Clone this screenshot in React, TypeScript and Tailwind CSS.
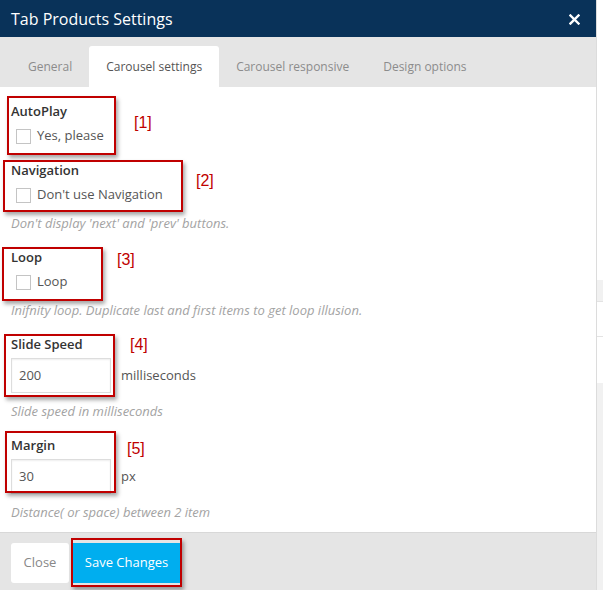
import React from 'react';

const font = { fontFamily: '"Open Sans", "Liberation Sans", sans-serif' };

function RedBox({ className, tag, tagClass }: { className: string; tag: string; tagClass: string }) {
  return (
    <>
      <div className={`absolute border-2 border-[#c00000] shadow-[2px_3px_4px_rgba(0,0,0,0.35)] pointer-events-none ${className}`} />
      <span className={`absolute text-[16px] leading-none text-[#c00000] font-['Liberation_Sans',sans-serif] ${tagClass}`}>{tag}</span>
    </>
  );
}

function Check({ label }: { label: string }) {
  return (
    <div className="flex items-center h-[18px] mt-[7px] pl-[5px]">
      <span className="w-[15px] h-[15px] border border-[#c4c4c4] bg-white shrink-0" />
      <span className="ml-[6px] text-[13px] text-[#555]">{label}</span>
    </div>
  );
}

function Label({ children }: { children: React.ReactNode }) {
  return <div className="h-[18px] leading-[18px] text-[13px] font-semibold text-[#333]">{children}</div>;
}

function Desc({ children, mt }: { children: React.ReactNode; mt: string }) {
  return <div className={`h-[18px] leading-[18px] text-[13px] italic text-[#a3a3a3] ${mt}`}>{children}</div>;
}

function NumberField({ value, unit }: { value: string; unit: string }) {
  return (
    <div className="flex items-center mt-[5px]">
      <div className="w-[100px] h-[35px] border border-[#ddd] shadow-[inset_0_1px_2px_rgba(0,0,0,0.07)] flex items-center pl-[7px] text-[13px] text-[#555]">
        {value}
      </div>
      <span className="ml-[10px] text-[13px] text-[#555]">{unit}</span>
    </div>
  );
}

export default function App() {
  const tabs = ['General', 'Carousel settings', 'Carousel responsive', 'Design options'];
  return (
    <div className="flex w-[603px] h-[590px] overflow-hidden bg-white" style={font}>
      <div className="w-[597px] shrink-0 flex flex-col border-r border-[#dcdcdc]">
        <div className="h-[37px] bg-[#093259] flex items-center justify-between pl-[11px] pr-[16px]">
          <span className="text-[16px] text-white leading-none">Tab Products Settings</span>
          <svg width="11" height="11" viewBox="0 0 11 11" className="mt-[2px]">
            <path d="M1.5 1.5L9.5 9.5M9.5 1.5L1.5 9.5" stroke="white" strokeWidth="2.4" strokeLinecap="square" />
          </svg>
        </div>

        <div className="h-[50px] bg-[#e5e5e5] flex items-end pl-[11px]">
          {tabs.map((t, i) => (
            <div
              key={t}
              className={`h-[41px] flex items-center pt-[1px] px-[17px] text-[12px] rounded-t-[3px] ${
                i === 1 ? 'bg-white text-[#555]' : 'text-[#8c8c8c]'
              }`}
            >
              {t}
            </div>
          ))}
        </div>

        <div className="relative flex-1 pt-[15px] pl-[11px]">
          <Label>AutoPlay</Label>
          <Check label="Yes, please" />
          <div className="mt-[16px]">
            <Label>Navigation</Label>
            <Check label="Don't use Navigation" />
            <Desc mt="mt-[10px]">Don't display 'next' and 'prev' buttons.</Desc>
          </div>
          <div className="mt-[16px]">
            <Label>Loop</Label>
            <Check label="Loop" />
            <Desc mt="mt-[10px]">Inifnity loop. Duplicate last and first items to get loop illusion.</Desc>
          </div>
          <div className="mt-[16px]">
            <Label>Slide Speed</Label>
            <NumberField value="200" unit="milliseconds" />
            <Desc mt="mt-[9px]">Slide speed in milliseconds</Desc>
          </div>
          <div className="mt-[16px]">
            <Label>Margin</Label>
            <NumberField value="30" unit="px" />
            <Desc mt="mt-[9px]">Distance( or space) between 2 item</Desc>
          </div>

          <RedBox className="left-[7px] top-[9px] w-[109px] h-[59px]" tag="[1]" tagClass="left-[134px] top-[28px]" />
          <RedBox className="left-[3px] top-[73px] w-[180px] h-[52px]" tag="[2]" tagClass="left-[196px] top-[86px]" />
          <RedBox className="left-[2px] top-[160px] w-[101px] h-[54px]" tag="[3]" tagClass="left-[117px] top-[165px]" />
          <RedBox className="left-[4px] top-[247px] w-[111px] h-[63px]" tag="[4]" tagClass="left-[130px] top-[250px]" />
          <RedBox className="left-[5px] top-[344px] w-[111px] h-[62px]" tag="[5]" tagClass="left-[127px] top-[354px]" />
        </div>

        <div className="relative h-[58px] bg-[#e5e5e5] border-t border-[#d8d8d8] flex items-start pt-[10px] pl-[11px] gap-[4px]">
          <button className="h-[40px] w-[58px] bg-white rounded-[3px] text-[13px] text-[#888]">Close</button>
          <button className="h-[40px] w-[107px] bg-[#00aeef] text-[13px] text-white">Save Changes</button>
          <div className="absolute left-[71px] top-[5px] w-[111px] h-[49px] border-2 border-[#c00000] shadow-[2px_3px_4px_rgba(0,0,0,0.35)]" />
        </div>
      </div>

      <div className="flex-1 flex flex-col">
        <div className="h-[280px]" />
        <div className="h-[22px] bg-[#f1f1f1] border-b border-[#e3e3e3]" />
        <div className="h-[35px] border-b border-[#e3e3e3]" />
        <div className="h-[46px]" />
        <div className="flex-1 bg-[#f1f1f1]" />
      </div>
    </div>
  );
}
